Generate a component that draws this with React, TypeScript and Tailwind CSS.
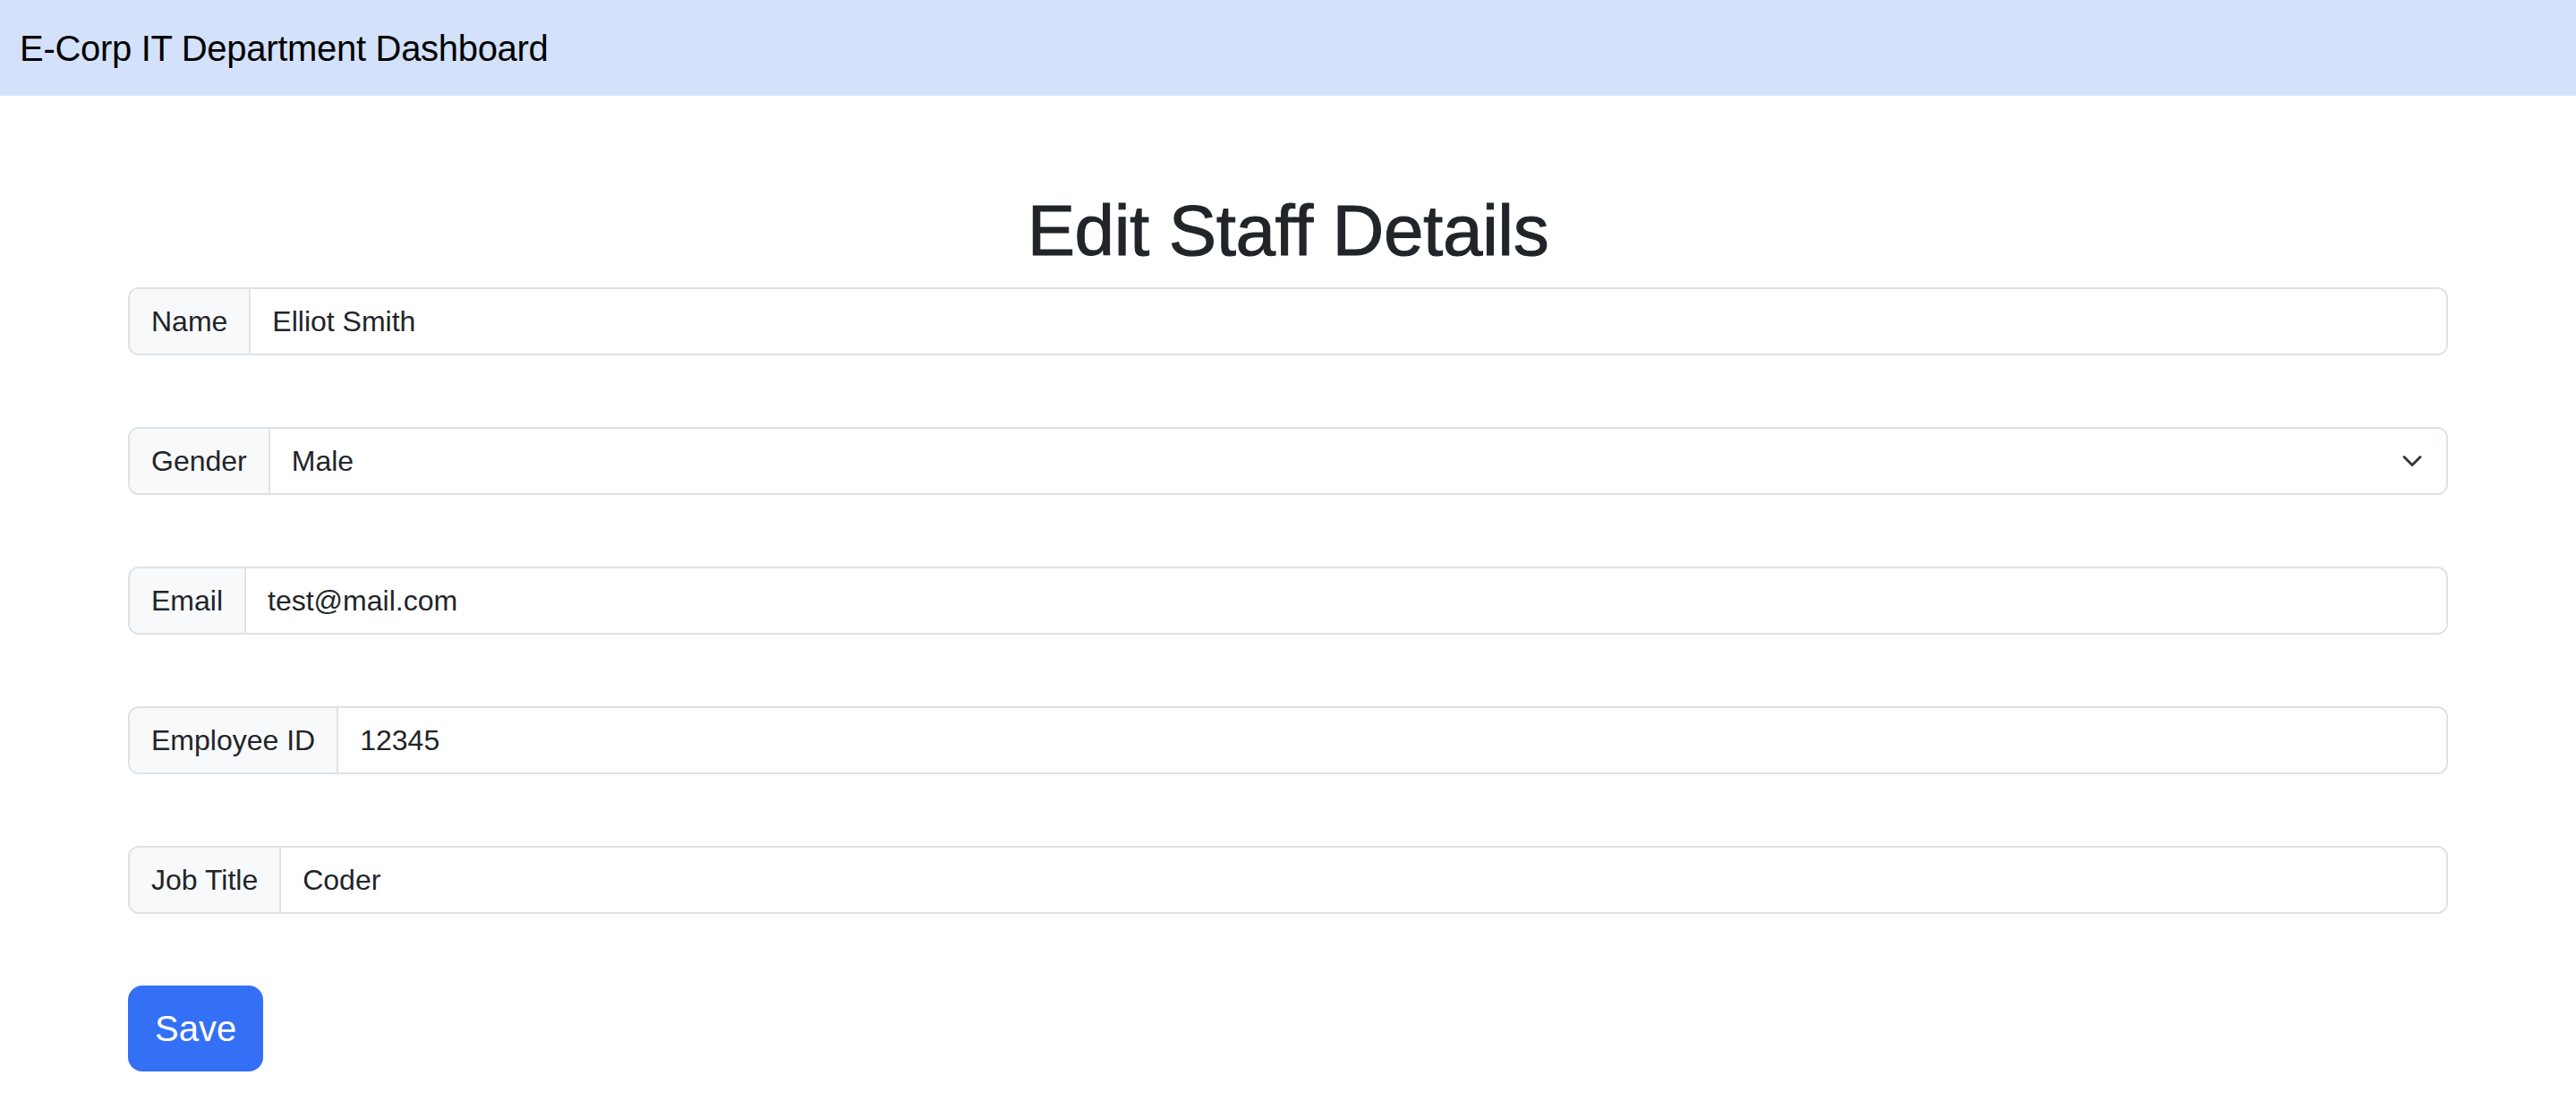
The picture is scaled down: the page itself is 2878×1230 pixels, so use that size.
import React from "react";

const font = "font-['Liberation_Sans',Arial,Helvetica,sans-serif]";

function Row({ label, value }: { label: string; value: string }) {
  return (
    <div className="flex h-[76px] w-full overflow-hidden rounded-[12px] border-2 border-[#dee2e6]">
      <div className="flex shrink-0 items-center border-r-2 border-[#dee2e6] bg-[#f8f9fa] px-[24px] text-[32px] text-[#212529]">
        {label}
      </div>
      <input
        readOnly
        value={value}
        className="min-w-0 flex-1 bg-white px-[24px] text-[32px] text-[#212529] outline-none"
      />
    </div>
  );
}

function SelectRow({ label, value }: { label: string; value: string }) {
  return (
    <div className="flex h-[76px] w-full overflow-hidden rounded-[12px] border-2 border-[#dee2e6]">
      <div className="flex shrink-0 items-center border-r-2 border-[#dee2e6] bg-[#f8f9fa] px-[24px] text-[32px] text-[#212529]">
        {label}
      </div>
      <div className="relative flex-1">
        <select
          value={value}
          onChange={() => {}}
          className="h-full w-full appearance-none bg-white pl-[24px] pr-[72px] text-[32px] text-[#212529] outline-none"
        >
          <option>Male</option>
          <option>Female</option>
          <option>Other</option>
        </select>
        <svg
          className="pointer-events-none absolute right-[22px] top-1/2 h-[24px] w-[32px] -translate-y-1/2"
          viewBox="0 0 16 16"
          fill="none"
        >
          <path
            d="m2 5 6 6 6-6"
            stroke="#343a40"
            strokeWidth="2"
            strokeLinecap="round"
            strokeLinejoin="round"
          />
        </svg>
      </div>
    </div>
  );
}

export default function App() {
  return (
    <div className={`${font} min-h-screen bg-white text-[#212529]`}>
      <header className="flex h-[107px] items-center bg-[#d3e1fa] px-[22px]">
        <span className="text-[40px] leading-[60px] tracking-[-0.3px] text-black">
          E-Corp IT Department Dashboard
        </span>
      </header>
      <main className="mx-auto w-[2592px] pt-[103px]">
        <h1 className="mb-[15px] text-center text-[80px] font-medium leading-[96px] tracking-[-0.4px] text-[#212529] [-webkit-text-stroke:1px_#212529]">
          Edit Staff Details
        </h1>
        <div className="flex flex-col items-start gap-[80px]">
          <Row label="Name" value="Elliot Smith" />
          <SelectRow label="Gender" value="Male" />
          <Row label="Email" value="test@mail.com" />
          <Row label="Employee ID" value="12345" />
          <Row label="Job Title" value="Coder" />
          <button className="flex h-[96px] items-center justify-center rounded-[16px] bg-[#3470f5] px-[30px] text-[40px] text-white">
            Save
          </button>
        </div>
      </main>
    </div>
  );
}
